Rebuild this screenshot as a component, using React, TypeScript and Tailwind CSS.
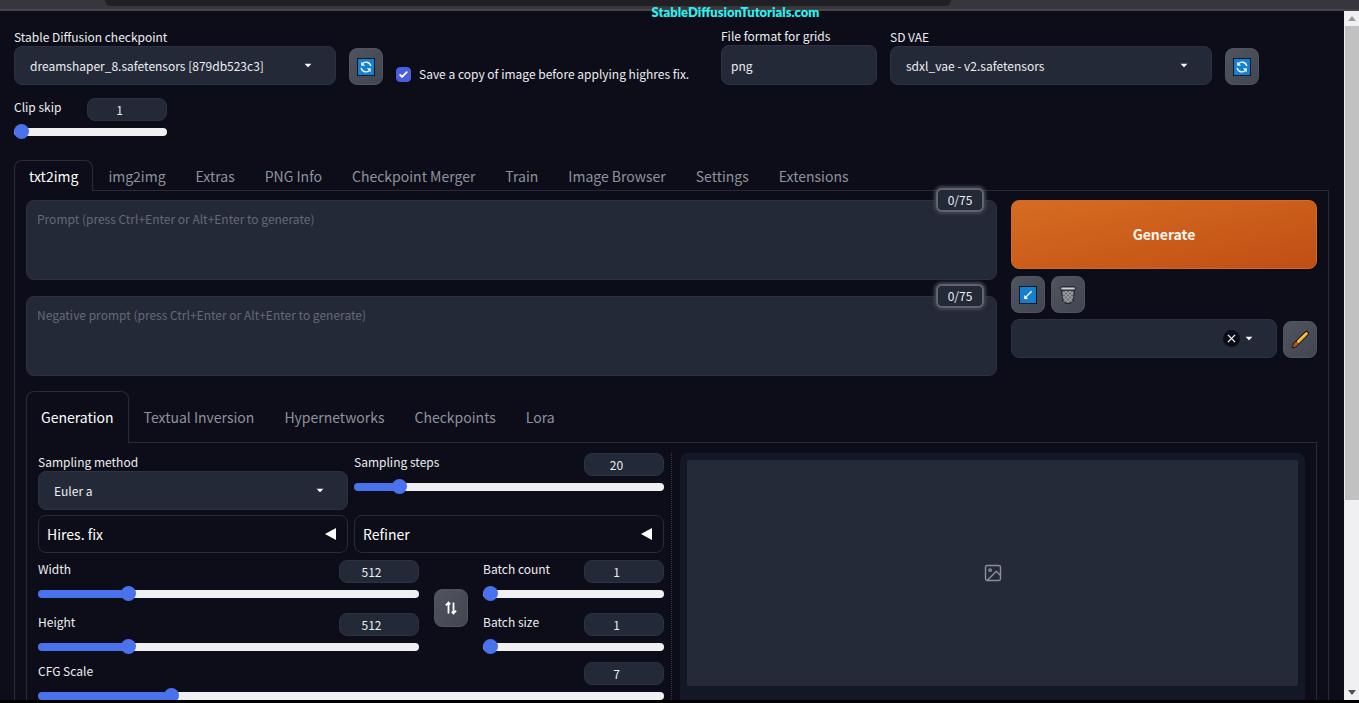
import React, { useState } from 'react';
import clsx from 'clsx';

const fieldClass =
  'w-full rounded-lg border border-[#2c3241] bg-[#232937] text-[12px] text-[#eceef2] outline-none';

const iconButtonClass =
  'flex w-[34px] shrink-0 items-center justify-center rounded-lg border border-[#50545f] bg-gradient-to-br from-[#50545f] to-[#414651]';

const Caret: React.FC = () => (
  <svg viewBox="0 0 10 6" className="h-[5px] w-2 fill-white">
    <path d="M0.8 0.8h8.4L5.8 4.7Q5 5.4 4.2 4.7Z" />
  </svg>
);

const RefreshIcon: React.FC = () => (
  <svg viewBox="0 0 18 18" className="h-[18px] w-[18px]">
    <rect x="0.5" y="0.5" width="17" height="17" fill="#1680cf" stroke="#07182c" />
    <g fill="none" stroke="#e6f5ff" strokeWidth="1.4">
      <path d="M5 6.2A4.9 4.9 0 0 1 13.8 8.2" />
      <path d="M13 11.8A4.9 4.9 0 0 1 4.2 9.8" />
    </g>
    <path d="M4.2 3.8v4h4zM13.8 14.2v-4h-4z" fill="#e6f5ff" />
  </svg>
);

const PasteIcon: React.FC = () => (
  <svg viewBox="0 0 18 18" className="h-[18px] w-[18px]">
    <rect x="0.5" y="0.5" width="17" height="17" fill="#1680cf" stroke="#07182c" />
    <path d="M12.6 5.2 6.4 11.6" stroke="#f2faff" strokeWidth="1.4" fill="none" />
    <path d="M5.2 9v4h4z" fill="#f2faff" />
  </svg>
);

const TrashIcon: React.FC = () => (
  <svg viewBox="0 0 18 20" className="h-5 w-[18px]">
    <path d="M2.4 4.5 4.1 16.4Q4.4 18.4 9 18.4T13.9 16.4L15.6 4.5Z" fill="#6a6d74" stroke="#15171c" />
    <g stroke="#c4c7cc" strokeWidth="0.7" fill="none">
      <path d="M3.6 7l9.6 9.6M3.6 11.4l6 6M6 5.4l8 8M10 5.4l4.4 4.4" />
      <path d="M14.4 7l-9.6 9.6M14.4 11.4l-6 6M12 5.4l-8 8M8 5.4 3.6 9.8" />
    </g>
    <rect x="1.3" y="1.8" width="15.4" height="3.4" rx="1.7" fill="#aaadb4" stroke="#15171c" />
    <path d="M4 3.5h10" stroke="#dcdee2" strokeWidth="0.8" />
  </svg>
);

const BrushIcon: React.FC = () => (
  <svg viewBox="0 0 20 20" className="h-5 w-5">
    <path d="M16.6 3.4 7.4 12.4" stroke="#14120f" strokeWidth="4.8" strokeLinecap="round" />
    <path d="M7.8 12.2q1.4 1.6.1 3.1-1.6 2.3-5.2 2.5-.9-.2-.6-.9.8-.7.9-2.1.4-2.6 2.2-3 1.6-.6 2.6.4z" fill="#b4521f" stroke="#14120f" />
    <path d="M16.5 3.5 8.3 11.6" stroke="#f2b632" strokeWidth="3" strokeLinecap="round" />
    <path d="M16 3.4 8.4 10.8" stroke="#fbd66b" strokeWidth="0.9" strokeLinecap="round" />
  </svg>
);

const SwapIcon: React.FC = () => (
  <svg viewBox="0 0 12 14" className="h-[14px] w-3" fill="none" stroke="#fff" strokeWidth="1.8">
    <path d="M3.5 12.6V2M0.9 4.4 3.5 1.6 5.2 3.4M8.5 1.4V12M11.1 9.6 8.5 12.4 6.8 10.6" />
  </svg>
);

const ImageIcon: React.FC = () => (
  <svg viewBox="0 0 24 24" className="h-5 w-5" fill="none" stroke="#8b909b" strokeWidth="1.7" strokeLinecap="round" strokeLinejoin="round">
    <rect x="3" y="3" width="18" height="18" rx="2" />
    <circle cx="8.5" cy="8.5" r="1.5" />
    <path d="M21 15 16 10 5 21" />
  </svg>
);

interface SelectFieldProps {
  id: string;
  label?: string;
  ariaLabel?: string;
  options: string[];
  children?: React.ReactNode;
}

const SelectField: React.FC<SelectFieldProps> = ({ id, label, ariaLabel, options, children }) => (
  <div className="min-w-0">
    {label && (
      <label htmlFor={id} className="block text-[12px] leading-[18px]">
        {label}
      </label>
    )}
    <div className="relative">
      <select id={id} aria-label={ariaLabel} className={clsx(fieldClass, 'block h-[39px] appearance-none pr-10 pl-[15px]')}>
        {options.map((option) => (
          <option key={option}>{option}</option>
        ))}
      </select>
      <div className="pointer-events-none absolute inset-y-0 right-6 flex items-center gap-[5px]">
        {children}
        <Caret />
      </div>
    </div>
  </div>
);

interface SliderProps {
  id: string;
  label: string;
  min: number;
  max: number;
  initial: number;
}

const Slider: React.FC<SliderProps> = ({ id, label, min, max, initial }) => {
  const [value, setValue] = useState(initial);
  const fill = `${((value - min) / (max - min)) * 100}%`;

  return (
    <div>
      <div className="flex h-[23px] items-start justify-between">
        <label htmlFor={id} className="text-[12px] leading-[18px]">
          {label}
        </label>
        <input
          type="number"
          aria-label={`${label} value`}
          value={value}
          min={min}
          max={max}
          onChange={(e) => setValue(Number(e.target.value))}
          className="h-[23px] w-20 rounded-lg border border-[#2c3241] bg-[#232937] px-2 text-center text-[12px] leading-5 outline-none"
        />
      </div>
      <input
        id={id}
        type="range"
        value={value}
        min={min}
        max={max}
        onChange={(e) => setValue(Number(e.target.value))}
        style={{ '--fill': fill } as React.CSSProperties}
        className="mt-[3px] block h-4 w-full appearance-none bg-transparent outline-none [&::-webkit-slider-runnable-track]:h-2 [&::-webkit-slider-runnable-track]:rounded-full [&::-webkit-slider-runnable-track]:bg-[linear-gradient(to_right,#4a72ec_var(--fill),#f0eff2_var(--fill))] [&::-webkit-slider-thumb]:-mt-1 [&::-webkit-slider-thumb]:size-[15px] [&::-webkit-slider-thumb]:appearance-none [&::-webkit-slider-thumb]:rounded-full [&::-webkit-slider-thumb]:bg-[#4a72ec]"
      />
    </div>
  );
};

interface TabsProps {
  tabs: string[];
  large?: boolean;
}

const Tabs: React.FC<TabsProps> = ({ tabs, large }) => {
  const [active, setActive] = useState(tabs[0]);
  return (
    <div role="tablist" className="relative z-10 -mb-px flex">
      {tabs.map((tab) => (
        <button
          key={tab}
          role="tab"
          aria-selected={tab === active}
          onClick={() => setActive(tab)}
          className={clsx(
            'rounded-t-lg border border-b-0 px-[14px] text-[14px] whitespace-nowrap',
            large ? 'h-[52px]' : 'h-[31px]',
            tab === active ? 'border-[#292a35] bg-[#0c0d18] text-white' : 'border-transparent text-[#8f929c]'
          )}
        >
          {tab}
        </button>
      ))}
    </div>
  );
};

const PromptBox: React.FC<{ label: string }> = ({ label }) => (
  <div className="relative">
    <textarea
      aria-label={label}
      placeholder={`${label} (press Ctrl+Enter or Alt+Enter to generate)`}
      className={clsx(fieldClass, 'block h-[80px] resize-none px-[10px] py-2 leading-5 placeholder:text-[#646a76]')}
    />
    <span className="absolute -top-3 right-[13px] flex h-6 w-[48px] items-center justify-center rounded-md border-2 border-[#60636e] bg-[#232937] text-[12px] shadow-[0_0_3px_2px_#41434f]">
      0/75
    </span>
  </div>
);

const Accordion: React.FC<{ title: string }> = ({ title }) => (
  <button className="flex h-[38px] items-center justify-between rounded-lg border border-[#292a35] pr-[11px] pl-2 text-[14px] text-white">
    <span>{title}</span>
    <svg viewBox="0 0 11 12" className="h-3 w-[11px] fill-white">
      <path d="M11 0v12L0 6z" />
    </svg>
  </button>
);

const QuickSettings: React.FC = () => (
  <>
    <div className="flex items-end gap-[13px] pr-[70px]">
      <div className="min-w-0 flex-[322]">
        <SelectField id="checkpoint" label="Stable Diffusion checkpoint" options={['dreamshaper_8.safetensors [879db523c3]']} />
      </div>
      <button aria-label="Refresh checkpoints" className={clsx(iconButtonClass, 'h-[37px]')}>
        <RefreshIcon />
      </button>
      <div className="min-w-0 flex-[312]">
        <label className="flex h-5 items-start gap-2 text-[12px] leading-[18px] whitespace-nowrap">
          <span className="relative mt-[2px] size-[15px] shrink-0">
            <input type="checkbox" defaultChecked className="peer block size-[15px] appearance-none rounded-sm border border-[#4a5fe0] checked:bg-[#4a5fe0]" />
            <svg viewBox="0 0 16 16" className="pointer-events-none absolute inset-0 hidden size-[15px] fill-white peer-checked:block">
              <path d="M12.207 4.793a1 1 0 0 1 0 1.414l-5 5a1 1 0 0 1-1.414 0l-2-2a1 1 0 0 1 1.414-1.414L6.5 9.086l4.293-4.293a1 1 0 0 1 1.414 0z" />
            </svg>
          </span>
          Save a copy of image before applying highres fix.
        </label>
      </div>
      <div className="min-w-0 flex-[156]">
        <label htmlFor="grid-format" className="block text-[12px] leading-[18px] whitespace-nowrap">
          File format for grids
        </label>
        <input id="grid-format" type="text" defaultValue="png" className={clsx(fieldClass, 'block h-[40px] px-[9px]')} />
      </div>
      <div className="min-w-0 flex-[322]">
        <SelectField id="vae" label="SD VAE" options={['sdxl_vae - v2.safetensors']} />
      </div>
      <button aria-label="Refresh VAE list" className={clsx(iconButtonClass, 'h-[37px]')}>
        <RefreshIcon />
      </button>
    </div>
    <div className="mt-[13px] w-[153px]">
      <Slider id="clip-skip" label="Clip skip" min={1} max={12} initial={1} />
    </div>
  </>
);

const GenerateColumn: React.FC = () => (
  <div className="min-w-0 flex-[306]">
    <button className="block h-[69px] w-full rounded-lg border border-[#d06a2a] bg-gradient-to-br from-[#d66d22] to-[#c04e14] text-[14px] font-bold text-[#f8f4f0]">
      Generate
    </button>
    <div className="mt-[7px] flex gap-[6px]">
      <button aria-label="Read generation parameters" className={clsx(iconButtonClass, 'h-[37px]')}>
        <PasteIcon />
      </button>
      <button aria-label="Clear prompt" className={clsx(iconButtonClass, 'h-[37px]')}>
        <TrashIcon />
      </button>
    </div>
    <div className="mt-[6px] flex items-end gap-[6px]">
      <div className="min-w-0 flex-1">
        <SelectField id="styles" ariaLabel="Styles" options={['']}>
          <button aria-label="Clear styles" className="pointer-events-auto flex size-[17px] items-center justify-center rounded-full bg-[#0c0d18]">
            <svg viewBox="0 0 10 10" className="size-[9px] stroke-white stroke-[1.4]">
              <path d="M1 1l8 8M9 1 1 9" />
            </svg>
          </button>
        </SelectField>
      </div>
      <button aria-label="Edit styles" className={clsx(iconButtonClass, 'h-[37px]')}>
        <BrushIcon />
      </button>
    </div>
  </div>
);

const GenerationSettings: React.FC = () => (
  <div className="min-w-0 flex-[626]">
    <div className="grid grid-cols-2 gap-x-[6px] gap-y-[5px]">
      <SelectField id="sampler" label="Sampling method" options={['Euler a']} />
      <Slider id="steps" label="Sampling steps" min={1} max={150} initial={20} />
      <Accordion title="Hires. fix" />
      <Accordion title="Refiner" />
    </div>
    <div className="mt-[7px] flex items-center gap-[15px]">
      <div className="flex min-w-0 flex-[381] flex-col gap-[11px]">
        <Slider id="width" label="Width" min={64} max={2048} initial={512} />
        <Slider id="height" label="Height" min={64} max={2048} initial={512} />
      </div>
      <button aria-label="Switch width and height" className={clsx(iconButtonClass, 'h-[38px]')}>
        <SwapIcon />
      </button>
      <div className="flex min-w-0 flex-[181] flex-col gap-[11px]">
        <Slider id="batch-count" label="Batch count" min={1} max={100} initial={1} />
        <Slider id="batch-size" label="Batch size" min={1} max={8} initial={1} />
      </div>
    </div>
    <div className="mt-[7px]">
      <Slider id="cfg" label="CFG Scale" min={1} max={30} initial={7} />
    </div>
  </div>
);

const Scrollbar: React.FC = () => (
  <div className="flex w-[15px] shrink-0 flex-col bg-[#f0eff1]">
    <div className="flex h-[15px] items-center justify-center">
      <svg viewBox="0 0 8 5" className="h-[5px] w-2 fill-[#9a9a9c]">
        <path d="M0 5 4 0l4 5z" />
      </svg>
    </div>
    <div className="min-h-0 flex-1">
      <div className="ml-px h-[72%] bg-[#c1c1c2]" />
    </div>
    <div className="flex h-[15px] items-center justify-center">
      <svg viewBox="0 0 8 5" className="h-[5px] w-2 fill-[#505052]">
        <path d="M0 0h8L4 5z" />
      </svg>
    </div>
  </div>
);

export default function App() {
  return (
    <div className="relative flex h-screen flex-col overflow-hidden bg-[#0c0d18] font-['Noto_Sans_CJK_SC','Noto_Sans',sans-serif] text-[#eceef2]">
      {/* Browser toolbar edge */}
      <div className="h-[11px] shrink-0 border-b-2 border-[#46454b] bg-[#37363c] pr-[30%] pl-[105px]">
        <div className="h-[6px] rounded-b-xl bg-[#202024]" />
      </div>
      <div className="absolute inset-x-0 top-[3px] pl-[112px] text-center font-['Lato',sans-serif] text-[13px] leading-[18px] font-extrabold text-[#2ff0ee]">
        StableDiffusionTutorials.com
      </div>

      <div className="flex min-h-0 flex-1">
        <main className="min-w-0 flex-1 overflow-hidden pt-4 pr-[15px] pl-[14px]">
          <QuickSettings />

          <div className="mt-5">
            <Tabs
              tabs={['txt2img', 'img2img', 'Extras', 'PNG Info', 'Checkpoint Merger', 'Train', 'Image Browser', 'Settings', 'Extensions']}
            />
            <div className="border border-[#292a35] px-[11px] pt-[9px]">
              <div className="flex gap-[14px]">
                <div className="flex min-w-0 flex-[971] flex-col gap-4">
                  <PromptBox label="Prompt" />
                  <PromptBox label="Negative prompt" />
                </div>
                <GenerateColumn />
              </div>

              <div className="mt-[15px]">
                <Tabs large tabs={['Generation', 'Textual Inversion', 'Hypernetworks', 'Checkpoints', 'Lora']} />
                <div className="flex border border-[#292a35] px-[11px] pt-[10px]">
                  <GenerationSettings />
                  <div className="mr-2 ml-[7px] border-l border-dotted border-[#3a3b46]" />
                  <section aria-label="Output" className="min-w-0 flex-[611] rounded-lg bg-[#141726] p-[7px] pb-16">
                    <div className="flex h-[226px] items-center justify-center rounded-xs bg-[#242a38]">
                      <ImageIcon />
                    </div>
                  </section>
                </div>
              </div>
            </div>
          </div>
        </main>
        <Scrollbar />
      </div>
      <div className="h-[3px] shrink-0 bg-black" />
    </div>
  );
}
